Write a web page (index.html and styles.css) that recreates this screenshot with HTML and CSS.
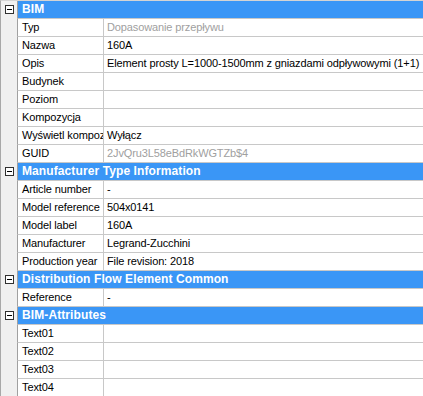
FILE: index.html
```html
<!DOCTYPE html>
<html lang="pl">
<head>
  <meta charset="UTF-8">
  <title>Właściwości BIM</title>
  <link rel="stylesheet" href="styles.css">
</head>
<body>

  <div class="props">

    <div class="row group">
      <div class="gutter"><span class="toggle"></span></div>
      <div class="title">BIM</div>
    </div>
    <div class="row"><div class="gutter"></div><div class="name">Typ</div><div class="value muted">Dopasowanie przepływu</div></div>
    <div class="row"><div class="gutter"></div><div class="name">Nazwa</div><div class="value">160A</div></div>
    <div class="row"><div class="gutter"></div><div class="name">Opis</div><div class="value">Element prosty L=1000-1500mm z gniazdami odpływowymi (1+1)</div></div>
    <div class="row"><div class="gutter"></div><div class="name">Budynek</div><div class="value"></div></div>
    <div class="row"><div class="gutter"></div><div class="name">Poziom</div><div class="value"></div></div>
    <div class="row"><div class="gutter"></div><div class="name">Kompozycja</div><div class="value"></div></div>
    <div class="row"><div class="gutter"></div><div class="name">Wyświetl kompozycję</div><div class="value">Wyłącz</div></div>
    <div class="row"><div class="gutter"></div><div class="name">GUID</div><div class="value muted">2JvQru3L58eBdRkWGTZb$4</div></div>

    <div class="row group">
      <div class="gutter"><span class="toggle"></span></div>
      <div class="title">Manufacturer Type Information</div>
    </div>
    <div class="row"><div class="gutter"></div><div class="name">Article number</div><div class="value">-</div></div>
    <div class="row"><div class="gutter"></div><div class="name">Model reference</div><div class="value">504x0141</div></div>
    <div class="row"><div class="gutter"></div><div class="name">Model label</div><div class="value">160A</div></div>
    <div class="row"><div class="gutter"></div><div class="name">Manufacturer</div><div class="value">Legrand-Zucchini</div></div>
    <div class="row"><div class="gutter"></div><div class="name">Production year</div><div class="value">File revision: 2018</div></div>

    <div class="row group">
      <div class="gutter"><span class="toggle"></span></div>
      <div class="title">Distribution Flow Element Common</div>
    </div>
    <div class="row"><div class="gutter"></div><div class="name">Reference</div><div class="value">-</div></div>

    <div class="row group">
      <div class="gutter"><span class="toggle"></span></div>
      <div class="title">BIM-Attributes</div>
    </div>
    <div class="row"><div class="gutter"></div><div class="name">Text01</div><div class="value"></div></div>
    <div class="row"><div class="gutter"></div><div class="name">Text02</div><div class="value"></div></div>
    <div class="row"><div class="gutter"></div><div class="name">Text03</div><div class="value"></div></div>
    <div class="row"><div class="gutter"></div><div class="name">Text04</div><div class="value"></div></div>

  </div>

</body>
</html>
```

FILE: styles.css
```css
body {
  margin: 0;
  background: #ffffff;
  font-family: "Liberation Sans", Arial, sans-serif;
  font-size: 11px;
  letter-spacing: -0.12px;
  color: #000000;
}

.props {
  width: 423px;
  border-top: 1px solid #d4d4d4;
  border-left: 1px solid #a8a8a8;
  box-sizing: border-box;
  background: #f0f0f0;
}

.row {
  display: flex;
  height: 18px;
}

.gutter {
  width: 16px;
  flex: none;
  display: flex;
  align-items: center;
  justify-content: center;
  padding-bottom: 1px;
  box-sizing: border-box;
}

.toggle {
  position: relative;
  width: 7px;
  height: 7px;
  border: 1px solid #303030;
  background: #ffffff;
}

.toggle::after {
  content: "";
  position: absolute;
  left: 1px;
  top: 3px;
  width: 5px;
  height: 1px;
  background: #000000;
}

.name,
.value,
.title {
  height: 17px;
  line-height: 17px;
  border-bottom: 1px solid #c8c8c8;
  background: #ffffff;
  white-space: nowrap;
  overflow: hidden;
}

.name {
  width: 81px;
  flex: none;
  padding-left: 4px;
  border-left: 1px solid #a0a0a0;
  border-right: 1px solid #c8c8c8;
}

.value {
  flex: 1;
  padding-left: 3px;
}

.muted {
  color: #a0a0a0;
}

.title {
  flex: 1;
  padding-left: 4px;
  border-left: 1px solid #a0a0a0;
  background: #3a96f6;
  color: #ffffff;
  font-size: 12px;
  font-weight: bold;
  letter-spacing: 0.1px;
}
```
